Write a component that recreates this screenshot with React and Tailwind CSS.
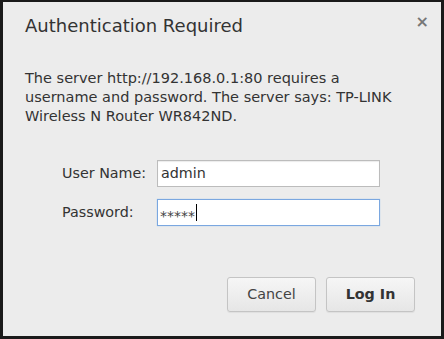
import React from 'react';

const App = () => {
  return (
    <div className="w-[444px] h-[339px] bg-[#1a1a1a] p-[2px] pl-[3px] pr-[3px] pb-[3px] font-['DejaVu_Sans',sans-serif]">
      <div className="relative flex h-full flex-col bg-[#ececec] text-[#333]">
        <button className="absolute right-[12px] top-[8px] text-[16px] font-bold text-[#777]">×</button>
        <h1 className="pl-[22px] pt-[12px] text-[18px] leading-[24px] text-[#333]">Authentication Required</h1>
        <p className="mt-[31px] pl-[22px] text-[14.5px] leading-[19px] text-[#333]">
          The server http://192.168.0.1:80 requires a<br />
          username and password. The server says: TP-LINK<br />
          Wireless N Router WR842ND.
        </p>
        <div className="mt-[34px] grid grid-cols-[95px_223px] items-center gap-y-[12px] pl-[59px]">
          <label className="text-[14.3px]">User Name:</label>
          <div className="flex h-[27px] items-center border border-[#bcbcbc] bg-white px-[3px] text-[14.3px] shadow-[inset_0_1px_1px_rgba(0,0,0,0.08)]">admin</div>
          <label className="text-[14.3px]">Password:</label>
          <div className="flex h-[27px] items-center border border-[#7aa7e0] bg-white px-[2px] shadow-[0_0_1px_#9bc0ec]">
            <span className="text-[14px] leading-none text-[#444] translate-y-[3px]">*****</span>
            <span className="ml-px h-[17px] w-px bg-black" />
          </div>
        </div>
        <div className="mt-auto mb-[24px] flex justify-end gap-[10px] pr-[26px]">
          <button className="h-[35px] w-[89px] rounded-[3px] border border-[#c4c4c4] bg-gradient-to-b from-[#f6f6f6] to-[#e6e6e6] text-[14.3px] text-[#444] shadow-[0_1px_1px_rgba(0,0,0,0.06)]">Cancel</button>
          <button className="h-[35px] w-[89px] rounded-[3px] border border-[#c4c4c4] bg-gradient-to-b from-[#f6f6f6] to-[#e6e6e6] text-[14.3px] font-bold text-[#333] shadow-[0_1px_1px_rgba(0,0,0,0.06)]">Log In</button>
        </div>
      </div>
    </div>
  );
};

export default App;
